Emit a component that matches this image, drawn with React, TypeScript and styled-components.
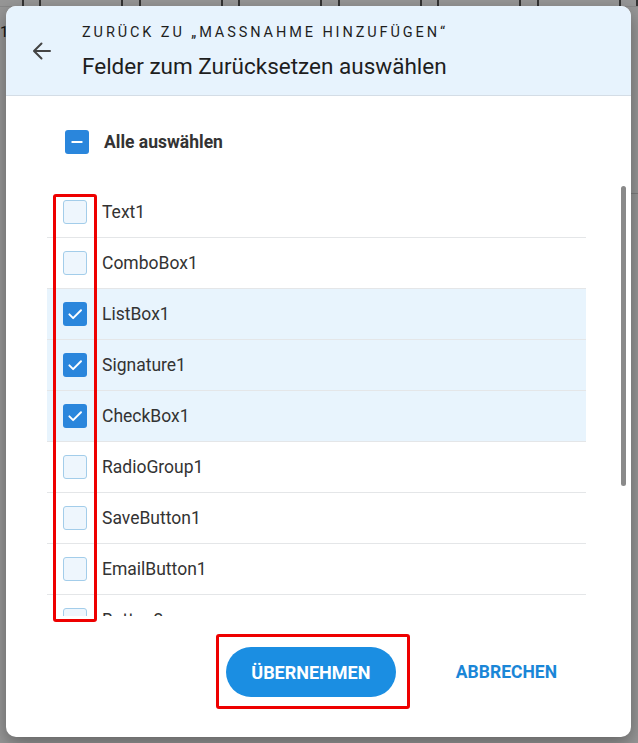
import React, { useState } from 'react'
import styled, { createGlobalStyle } from 'styled-components'

const GlobalStyle = createGlobalStyle`
  html, body {
    margin: 0;
    padding: 0;
    overflow: hidden;
  }
  body {
    font-family: Roboto, "Noto Sans", "Liberation Sans", sans-serif;
    color: #333;
  }
`

const Page = styled.div`
  position: relative;
  width: 638px;
  height: 743px;
  overflow: hidden;
  background: #f4f4f4;
`

/* app behind the dialog, only its edges show */
const AppToolbar = styled.div`
  display: flex;
  gap: 80px;
  align-items: flex-end;
  height: 6px;
  padding-left: 22px;
  overflow: hidden;
  border-bottom: 1px solid #ddd;
`

const ToolIcon = styled.span`
  display: block;
  width: 16px;
  height: 14px;
  margin-bottom: -8px;
  border: 2px solid #555;
  border-radius: 2px;
`

const AppBody = styled.div`
  display: flex;
  justify-content: space-between;
`

const AppLeft = styled.div`
  padding-top: 16px;
  font-size: 15px;
  color: #222;
`

const AppRight = styled.div`
  display: flex;
  flex-direction: column;
  width: 60px;
  padding-top: 12px;
  font-size: 15px;
  color: #222;
`

const AppLine = styled.div<{ $h: number; $blue?: boolean; $bold?: boolean; $rule?: boolean }>`
  height: ${p => p.$h}px;
  line-height: ${p => p.$h}px;
  color: ${p => (p.$blue ? '#1a73c0' : '#222')};
  font-weight: ${p => (p.$bold ? 700 : 400)};
  font-size: ${p => (p.$blue ? 20 : 15)}px;
  border-bottom: ${p => (p.$rule ? '1px solid #ccc' : 'none')};
`

const Scrim = styled.div`
  position: absolute;
  inset: 0;
  background: rgba(0, 0, 0, 0.38);
  padding: 6px 7px 6px 6px;
`

const Dialog = styled.div`
  display: flex;
  flex-direction: column;
  height: 731px;
  background: #fff;
  border-radius: 10px;
  overflow: hidden;
  box-shadow: 0 6px 18px rgba(0, 0, 0, 0.35);
`

const Header = styled.div`
  display: flex;
  align-items: center;
  height: 89px;
  background: #e7f3fd;
  border-bottom: 1px solid #d4dde6;
  flex-shrink: 0;
`

const BackButton = styled.button`
  display: flex;
  align-items: center;
  justify-content: center;
  width: 40px;
  height: 40px;
  margin: 0 20px 0 16px;
  padding: 0;
  border: none;
  background: transparent;
  color: #444;
  cursor: pointer;
`

const HeaderText = styled.div`
  display: flex;
  flex-direction: column;
  gap: 11px;
  padding-top: 2px;
`

const Overline = styled.div`
  font-size: 14.5px;
  letter-spacing: 2.9px;
  text-transform: uppercase;
  color: #1e1e1e;
  line-height: 18px;
`

const Title = styled.div`
  font-size: 22.5px;
  color: #1e1e1e;
  line-height: 26px;
`

const Body = styled.div`
  flex: 1;
  display: flex;
  flex-direction: column;
  min-height: 0;
`

const SelectAll = styled.label`
  display: flex;
  align-items: center;
  gap: 15px;
  height: 44px;
  margin: 24px 0 23px 59px;
  font-size: 17.5px;
  font-weight: 700;
  color: #333;
`

const ListWrap = styled.div`
  position: relative;
  height: 429px;
  margin: 0 5px 0 41px;
  flex-shrink: 0;
`

const List = styled.div`
  height: 100%;
  margin-right: 40px;
  overflow: hidden;
`

const ScrollThumb = styled.div`
  position: absolute;
  top: -1px;
  right: 0;
  width: 5px;
  height: 300px;
  border-radius: 3px;
  background: #8a8a8a;
`

const Row = styled.div<{ $checked: boolean }>`
  display: flex;
  align-items: center;
  gap: 15px;
  height: 50px;
  padding-left: 16px;
  border-bottom: 1px solid #e4e6e8;
  background: ${p => (p.$checked ? '#e8f4fd' : '#fff')};
  font-size: 17.5px;
  color: #333;
`

const Box = styled.span<{ $on: boolean }>`
  display: flex;
  align-items: center;
  justify-content: center;
  box-sizing: border-box;
  width: 24px;
  height: 24px;
  flex-shrink: 0;
  border-radius: 3px;
  background: ${p => (p.$on ? '#2a86dc' : '#eef6fd')};
  border: ${p => (p.$on ? 'none' : '1.5px solid #a3cdea')};
`

const Footer = styled.div`
  display: flex;
  align-items: center;
  justify-content: flex-end;
  gap: 44px;
  padding: 31px 58px 39px 0;
`

const PrimaryButton = styled.button`
  width: 170px;
  height: 50px;
  border: none;
  border-radius: 25px;
  background: #1b8ee2;
  color: #fff;
  font-family: inherit;
  font-size: 18px;
  font-weight: 700;
  cursor: pointer;
`

const TextButton = styled.button`
  padding: 0 16px;
  height: 50px;
  border: none;
  background: transparent;
  color: #1a86d7;
  font-family: inherit;
  font-size: 17.5px;
  font-weight: 700;
  cursor: pointer;
`

const Highlight = styled.div<{ $x: number; $y: number; $w: number; $h: number }>`
  position: absolute;
  left: ${p => p.$x}px;
  top: ${p => p.$y}px;
  width: ${p => p.$w}px;
  height: ${p => p.$h}px;
  box-sizing: border-box;
  border: 3px solid #ee0000;
  border-radius: 3px;
  pointer-events: none;
`

const Check = () => (
  <svg width="18" height="18" viewBox="0 0 24 24" fill="none">
    <path d="M4.5 12.5l5 5L20 7" stroke="#fff" strokeWidth="2.6" strokeLinecap="round" strokeLinejoin="round" />
  </svg>
)

const Dash = () => (
  <svg width="16" height="16" viewBox="0 0 24 24" fill="none">
    <path d="M5 12h14" stroke="#fff" strokeWidth="3.2" strokeLinecap="round" />
  </svg>
)

const ArrowLeft = () => (
  <svg width="24" height="24" viewBox="0 0 24 24" fill="none">
    <path d="M20 12H4.5M11.5 4.5L4 12l7.5 7.5" stroke="currentColor" strokeWidth="2" strokeLinecap="round" strokeLinejoin="round" />
  </svg>
)

const initialFields = [
  { name: 'Text1', checked: false },
  { name: 'ComboBox1', checked: false },
  { name: 'ListBox1', checked: true },
  { name: 'Signature1', checked: true },
  { name: 'CheckBox1', checked: true },
  { name: 'RadioGroup1', checked: false },
  { name: 'SaveButton1', checked: false },
  { name: 'EmailButton1', checked: false },
  { name: 'Button2', checked: false },
]

const App: React.FC = () => {
  const [fields, setFields] = useState(initialFields)

  const toggle = (i: number) =>
    setFields(prev => prev.map((f, idx) => (idx === i ? { ...f, checked: !f.checked } : f)))

  return (
    <Page>
      <GlobalStyle />
      <AppToolbar>
        <ToolIcon />
        <ToolIcon />
        <ToolIcon />
        <ToolIcon />
        <ToolIcon />
        <ToolIcon />
        <ToolIcon />
      </AppToolbar>
      <AppBody>
        <AppLeft>1:</AppLeft>
        <AppRight>
          <AppLine $h={24}>at</AppLine>
          <AppLine $h={150} $blue $rule>
            neu
          </AppLine>
          <AppLine $h={68}>pos</AppLine>
          <AppLine $h={68} $bold>
            er
          </AppLine>
          <AppLine $h={68}>st</AppLine>
          <AppLine $h={142}>st</AppLine>
          <AppLine $h={40}>e</AppLine>
        </AppRight>
      </AppBody>

      <Scrim>
        <Dialog>
          <Header>
            <BackButton aria-label="Zurück">
              <ArrowLeft />
            </BackButton>
            <HeaderText>
              <Overline>Zurück zu „Massnahme hinzufügen“</Overline>
              <Title>Felder zum Zurücksetzen auswählen</Title>
            </HeaderText>
          </Header>

          <Body>
            <SelectAll>
              <Box $on>
                <Dash />
              </Box>
              Alle auswählen
            </SelectAll>

            <ListWrap>
              <List>
                {fields.map((f, i) => (
                  <Row key={f.name} $checked={f.checked} onClick={() => toggle(i)}>
                    <Box $on={f.checked}>{f.checked && <Check />}</Box>
                    {f.name}
                  </Row>
                ))}
              </List>
              <ScrollThumb />
            </ListWrap>

            <Footer>
              <PrimaryButton>ÜBERNEHMEN</PrimaryButton>
              <TextButton>ABBRECHEN</TextButton>
            </Footer>
          </Body>
        </Dialog>

        <Highlight $x={53} $y={194} $w={44} $h={428} />
        <Highlight $x={216} $y={634} $w={194} $h={75} />
      </Scrim>
    </Page>
  )
}

export default App
